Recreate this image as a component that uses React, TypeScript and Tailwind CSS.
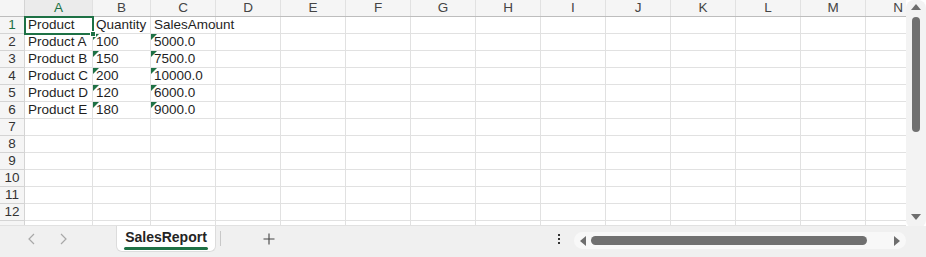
import React from "react";

const cols = [
  { name: "A", w: "w-[68px]" },
  { name: "B", w: "w-[58px]" },
  { name: "C", w: "w-[65px]" },
  { name: "D", w: "w-[65px]" },
  { name: "E", w: "w-[65px]" },
  { name: "F", w: "w-[65px]" },
  { name: "G", w: "w-[65px]" },
  { name: "H", w: "w-[65px]" },
  { name: "I", w: "w-[65px]" },
  { name: "J", w: "w-[65px]" },
  { name: "K", w: "w-[65px]" },
  { name: "L", w: "w-[65px]" },
  { name: "M", w: "w-[65px]" },
  { name: "N", w: "w-[65px]" },
];

const data: string[][] = [
  ["Product", "Quantity", "SalesAmount"],
  ["Product A", "100", "5000.0"],
  ["Product B", "150", "7500.0"],
  ["Product C", "200", "10000.0"],
  ["Product D", "120", "6000.0"],
  ["Product E", "180", "9000.0"],
];

const rows = Array.from({ length: 13 }, (_, i) => i + 1);

function Cell({ text, w, flag }: { text?: string; w: string; flag?: boolean }) {
  return (
    <div
      className={`relative ${w} shrink-0 h-[17px] border-r border-b border-[#e1e1e1] pl-[3px] text-[13.5px] leading-[16px] text-[#1f1f1f] whitespace-nowrap`}
    >
      {flag && (
        <span className="absolute left-0 top-0 w-0 h-0 border-t-[6px] border-r-[6px] border-t-[#1e7145] border-r-transparent" />
      )}
      <span className="relative z-10">{text}</span>
    </div>
  );
}

export default function App() {
  return (
    <div
      className="w-[926px] h-[257px] bg-white overflow-hidden flex flex-col"
      style={{ fontFamily: "'Liberation Sans', Arial, sans-serif" }}
    >
      <div className="flex h-[226px]">
        {/* grid */}
        <div className="relative w-[906px] h-[226px] overflow-hidden border-b border-[#e1e1e1]">
          {/* column header */}
          <div className="flex h-[17px] bg-[#f5f5f5] border-b border-[#bdbdbd]">
            <div className="w-[25px] shrink-0 border-r border-[#d4d4d4]" />
            {cols.map((c) => (
              <div
                key={c.name}
                className={`${c.w} shrink-0 border-r border-[#e1e1e1] text-center text-[13.5px] leading-[16px] ${
                  c.name === "A" ? "text-[#1e7145] bg-[#ebebeb]" : "text-[#444]"
                }`}
              >
                {c.name}
              </div>
            ))}
          </div>
          {rows.map((r) => (
            <div key={r} className="flex h-[17px]">
              <div
                className={`w-[25px] shrink-0 h-[17px] bg-[#f5f5f5] border-r border-b border-[#d4d4d4] text-center text-[13.5px] leading-[16px] ${
                  r === 1 ? "text-[#1e7145] bg-[#ebebeb]" : "text-[#333]"
                }`}
              >
                {r < 13 ? r : ""}
              </div>
              {cols.map((c, ci) => {
                const text = data[r - 1]?.[ci];
                return (
                  <Cell
                    key={c.name}
                    w={c.w}
                    text={text}
                    flag={r > 1 && r <= 6 && ci > 0 && ci < 3}
                  />
                );
              })}
            </div>
          ))}
          {/* selected cell A1 */}
          <div className="absolute left-[24px] top-[16px] w-[70px] h-[19px] border-2 border-[#1e7145] z-20" />
          <div className="absolute left-[90px] top-[31px] w-[6px] h-[6px] bg-[#1e7145] border border-white z-30" />
        </div>
        {/* vertical scrollbar */}
        <div className="w-[20px] h-[228px] bg-[#f3f3f3] rounded-[8px] flex flex-col items-center pt-[4px]">
          <span className="w-0 h-0 border-l-[5px] border-r-[5px] border-b-[6px] border-l-transparent border-r-transparent border-b-[#6e6e6e]" />
          <div className="mt-[7px] w-[8px] h-[115px] rounded-full bg-[#707070]" />
          <div className="flex-1" />
          <span className="mb-[8px] w-0 h-0 border-l-[5px] border-r-[5px] border-t-[6px] border-l-transparent border-r-transparent border-t-[#6e6e6e]" />
        </div>
      </div>

      {/* bottom bar */}
      <div className="flex-1 bg-[#f0f0f0] flex items-start">
        <div className="w-[116px] h-[26px] flex items-center pl-[27px] gap-[21px] text-[#a8a8a8]">
          <svg width="10" height="12" viewBox="0 0 10 12" fill="none" stroke="currentColor" strokeWidth="1.2">
            <path d="M7 1 L2 6 L7 11" />
          </svg>
          <svg width="10" height="12" viewBox="0 0 10 12" fill="none" stroke="currentColor" strokeWidth="1.2">
            <path d="M3 1 L8 6 L3 11" />
          </svg>
        </div>
        <div className="w-[100px] h-[26px] bg-white border border-t-0 border-[#dcdcdc] rounded-b-[6px] flex flex-col items-center pt-[3px]">
          <span className="text-[14px] leading-[17px] font-bold text-[#242424]">SalesReport</span>
          <span className="mt-[1px] w-[84px] h-[3px] bg-[#1e7145] rounded-full" />
        </div>
        <div className="ml-[4px] mt-[5px] w-px h-[15px] bg-[#c8c8c8]" />
        <div className="ml-[42px] mt-[7px] text-[#444]">
          <svg width="12" height="12" viewBox="0 0 12 12" stroke="currentColor" strokeWidth="1.1">
            <path d="M6 0.5 V11.5 M0.5 6 H11.5" />
          </svg>
        </div>
        <div className="ml-[283px] mt-[8px] flex flex-col gap-[2px]">
          <span className="w-[2px] h-[2px] bg-[#333]" />
          <span className="w-[2px] h-[2px] bg-[#333]" />
          <span className="w-[2px] h-[2px] bg-[#333]" />
        </div>
        <div className="ml-[14px] mt-[6px] w-[332px] h-[17px] rounded-full bg-[#f8f8f8] flex items-center pl-[6px] pr-[6px]">
          <span className="w-0 h-0 border-t-[5px] border-b-[5px] border-r-[6px] border-t-transparent border-b-transparent border-r-[#6e6e6e]" />
          <div className="ml-[5px] w-[276px] h-[9px] rounded-full bg-[#707070]" />
          <div className="flex-1" />
          <span className="w-0 h-0 border-t-[5px] border-b-[5px] border-l-[6px] border-t-transparent border-b-transparent border-l-[#6e6e6e]" />
        </div>
      </div>
    </div>
  );
}
